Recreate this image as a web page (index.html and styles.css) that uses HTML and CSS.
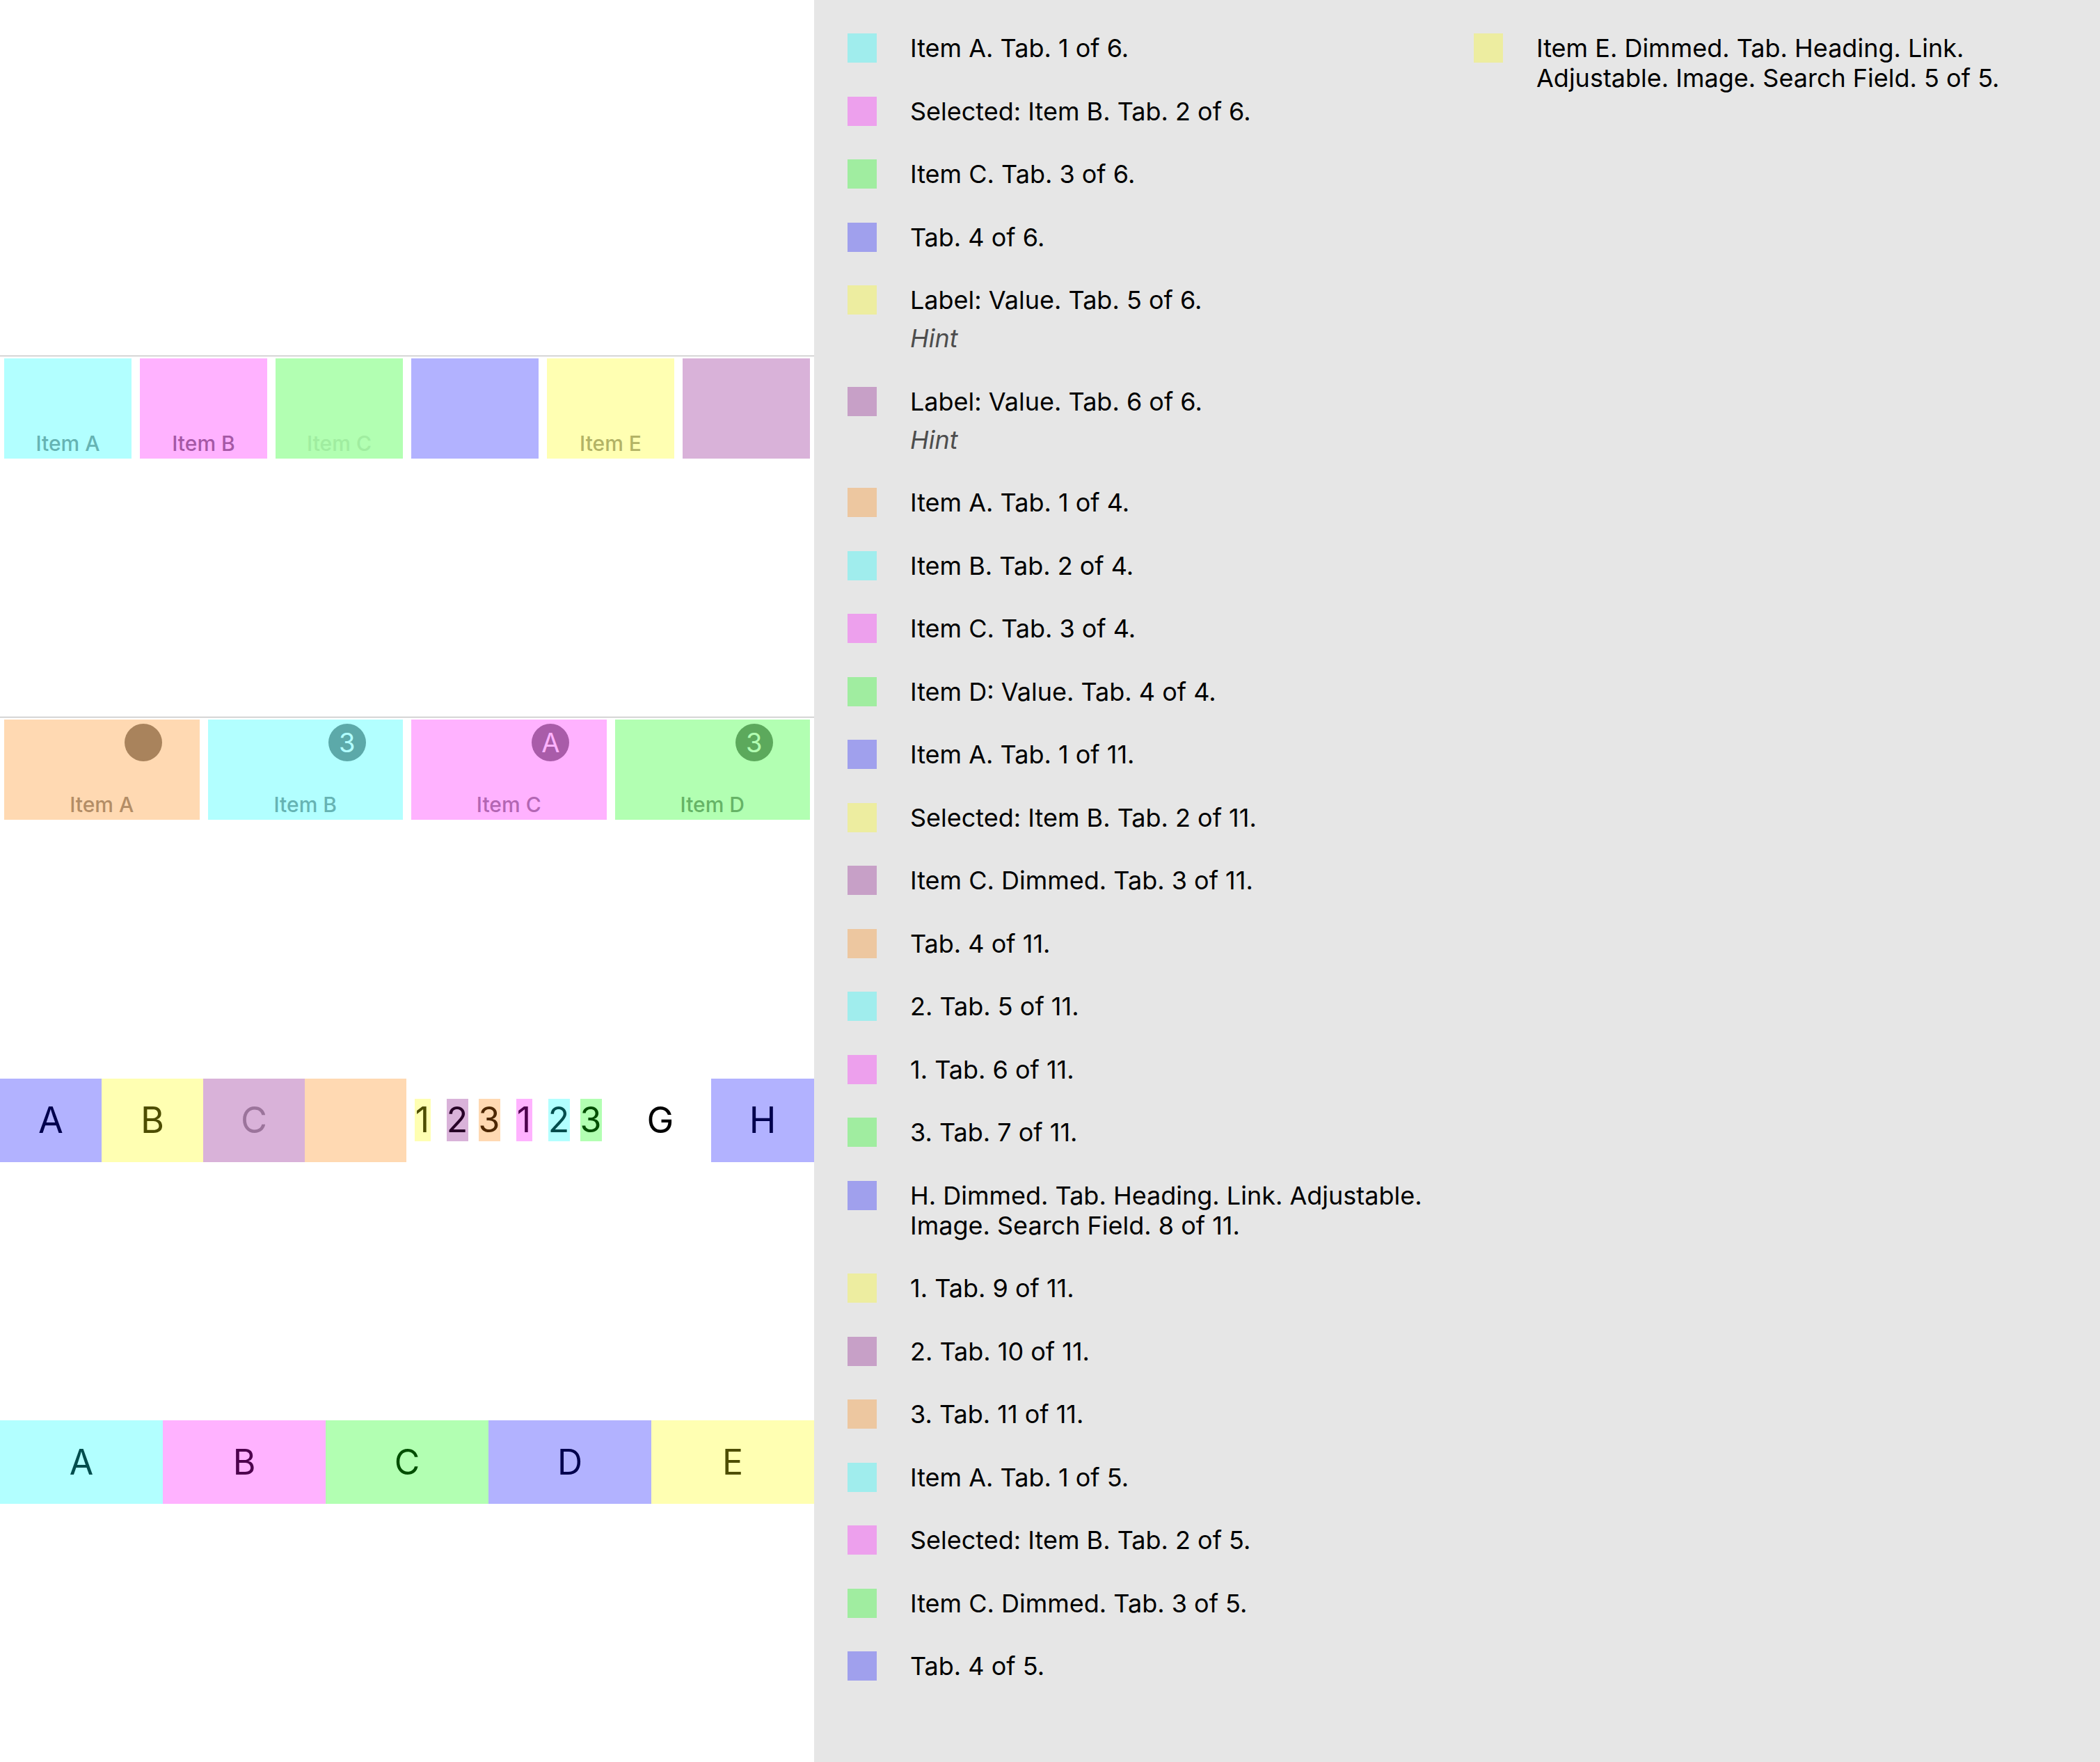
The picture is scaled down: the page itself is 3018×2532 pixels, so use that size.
FILE: index.html
```html
<!DOCTYPE html>
<html lang="en">
<head>
<meta charset="utf-8">
<meta name="viewport" content="width=device-width, initial-scale=1">
<title>Tab bars</title>
<link rel="stylesheet" href="styles.css">
</head>
<body>
<main class="page">
  <section class="preview" aria-label="Tab bars">
    <div class="tabbar tabbar-six" role="tablist">
      <button class="tab cyan" role="tab"><span class="tab-label">Item A</span></button>
      <button class="tab magenta" role="tab" aria-selected="true"><span class="tab-label">Item B</span></button>
      <button class="tab green" role="tab"><span class="tab-label faint">Item C</span></button>
      <button class="tab blue" role="tab"></button>
      <button class="tab yellow" role="tab" aria-label="Label"><span class="tab-label">Item E</span></button>
      <button class="tab purple" role="tab" aria-label="Label"></button>
    </div>
    <div class="tabbar tabbar-four" role="tablist">
      <button class="tab orange" role="tab"><span class="badge"></span><span class="tab-label">Item A</span></button>
      <button class="tab cyan" role="tab"><span class="badge">3</span><span class="tab-label">Item B</span></button>
      <button class="tab magenta" role="tab"><span class="badge">A</span><span class="tab-label">Item C</span></button>
      <button class="tab green" role="tab"><span class="badge">3</span><span class="tab-label">Item D</span></button>
    </div>
    <div class="strip strip-eight" role="tablist">
      <button class="segment blue" role="tab">A</button>
      <button class="segment yellow" role="tab" aria-selected="true">B</button>
      <button class="segment purple" role="tab" disabled>C</button>
      <button class="segment orange" role="tab"></button>
      <div class="digits">
        <button class="digit yellow" role="tab">1</button>
        <button class="digit purple" role="tab">2</button>
        <button class="digit orange" role="tab">3</button>
      </div>
      <div class="digits">
        <button class="digit magenta" role="tab">1</button>
        <button class="digit cyan" role="tab">2</button>
        <button class="digit green" role="tab">3</button>
      </div>
      <div class="segment">G</div>
      <button class="segment blue" role="tab">H</button>
    </div>
    <div class="strip strip-five" role="tablist">
      <button class="segment cyan" role="tab">A</button>
      <button class="segment magenta" role="tab" aria-selected="true">B</button>
      <button class="segment green" role="tab">C</button>
      <button class="segment blue" role="tab">D</button>
      <button class="segment yellow" role="tab">E</button>
    </div>
  </section>

  <section class="legend" aria-label="Descriptions">
    <ul class="legend-column">
      <li class="entry cyan"><p>Item A. Tab. 1 of 6.</p></li>
      <li class="entry magenta"><p>Selected: Item B. Tab. 2 of 6.</p></li>
      <li class="entry green"><p>Item C. Tab. 3 of 6.</p></li>
      <li class="entry blue"><p>Tab. 4 of 6.</p></li>
      <li class="entry yellow"><p>Label: Value. Tab. 5 of 6.</p><p class="hint">Hint</p></li>
      <li class="entry purple"><p>Label: Value. Tab. 6 of 6.</p><p class="hint">Hint</p></li>
      <li class="entry orange"><p>Item A. Tab. 1 of 4.</p></li>
      <li class="entry cyan"><p>Item B. Tab. 2 of 4.</p></li>
      <li class="entry magenta"><p>Item C. Tab. 3 of 4.</p></li>
      <li class="entry green"><p>Item D: Value. Tab. 4 of 4.</p></li>
      <li class="entry blue"><p>Item A. Tab. 1 of 11.</p></li>
      <li class="entry yellow"><p>Selected: Item B. Tab. 2 of 11.</p></li>
      <li class="entry purple"><p>Item C. Dimmed. Tab. 3 of 11.</p></li>
      <li class="entry orange"><p>Tab. 4 of 11.</p></li>
      <li class="entry cyan"><p>2. Tab. 5 of 11.</p></li>
      <li class="entry magenta"><p>1. Tab. 6 of 11.</p></li>
      <li class="entry green"><p>3. Tab. 7 of 11.</p></li>
      <li class="entry blue"><p>H. Dimmed. Tab. Heading. Link. Adjustable. Image. Search Field. 8 of 11.</p></li>
      <li class="entry yellow"><p>1. Tab. 9 of 11.</p></li>
      <li class="entry purple"><p>2. Tab. 10 of 11.</p></li>
      <li class="entry orange"><p>3. Tab. 11 of 11.</p></li>
      <li class="entry cyan"><p>Item A. Tab. 1 of 5.</p></li>
      <li class="entry magenta"><p>Selected: Item B. Tab. 2 of 5.</p></li>
      <li class="entry green"><p>Item C. Dimmed. Tab. 3 of 5.</p></li>
      <li class="entry blue"><p>Tab. 4 of 5.</p></li>
    </ul>
    <ul class="legend-column">
      <li class="entry yellow"><p>Item E. Dimmed. Tab. Heading. Link. Adjustable. Image. Search Field. 5 of 5.</p></li>
    </ul>
  </section>
</main>
</body>
</html>
```
FILE: styles.css
```css
* {
  box-sizing: border-box;
}

body {
  margin: 0;
  background: #fff;
  color: #000;
  font-family: Inter, "Liberation Sans", sans-serif;
}

button {
  border: 0;
  padding: 0;
  background: none;
  color: inherit;
  font: inherit;
}

/* Marker tints, laid translucently over whatever they mark */
.cyan { --tint: rgb(0 255 255 / 30%); }
.magenta { --tint: rgb(255 0 255 / 30%); }
.green { --tint: rgb(0 255 0 / 30%); }
.blue { --tint: rgb(0 0 255 / 30%); }
.yellow { --tint: rgb(255 255 0 / 30%); }
.purple { --tint: rgb(128 0 128 / 30%); }
.orange { --tint: rgb(255 128 0 / 30%); }

.page {
  display: grid;
  grid-template-columns: minmax(0, 195fr) minmax(0, 308fr);
  min-height: 100vh;
}

/* Tab bars */
.preview {
  display: flex;
  flex-direction: column;
  justify-content: space-evenly;
  padding-top: 140px;
}

.tab,
.segment,
.digit {
  position: relative;
}

.tab::after,
.segment::after,
.digit::after {
  content: "";
  position: absolute;
  inset: 0;
  background: var(--tint, transparent);
}

.tabbar {
  display: grid;
  gap: 12px;
  padding: 3px 6px 0;
  border-top: 1px solid #b2b2b2;
}

.tabbar-six {
  grid-template-columns: repeat(6, minmax(0, 1fr));
}

.tabbar-four {
  grid-template-columns: repeat(4, minmax(0, 1fr));
}

.tab {
  display: flex;
  flex-direction: column;
  justify-content: flex-end;
  align-items: center;
  height: 144px;
  padding-bottom: 4px;
  color: #929292;
}

.tab[aria-selected="true"] {
  color: #7e7e7e;
}

.tab-label {
  font-size: 30px;
  font-weight: 500;
  line-height: 36px;
}

.faint {
  color: #e5e5e5;
}

.badge {
  position: absolute;
  top: 6px;
  left: calc(50% + 33px);
  width: 54px;
  height: 54px;
  border-radius: 50%;
  background: #858585;
  color: #fff;
  font-size: 38px;
  line-height: 54px;
  text-align: center;
}

.strip {
  display: grid;
  height: 120px;
}

.strip-eight {
  grid-template-columns: repeat(7, minmax(0, 73fr)) minmax(0, 74fr);
  font-size: 52px;
}

.strip-five {
  grid-template-columns: repeat(5, minmax(0, 1fr));
  font-size: 50px;
}

.segment {
  display: flex;
  justify-content: center;
  align-items: center;
}

.segment:disabled {
  color: #a7a7a7;
}

.digits {
  display: flex;
  justify-content: center;
  align-items: center;
  gap: 15px;
  font-size: 50px;
  line-height: 61px;
}

.digit {
  display: flex;
  justify-content: center;
  width: 31px;
}

.digit:first-child {
  width: 23px;
  margin-right: 8px;
}

/* Legend */
.legend {
  display: grid;
  grid-template-columns: repeat(2, minmax(0, 1fr));
  gap: 60px;
  padding: 48px 60px 116px 48px;
  background: #e6e6e6;
}

.legend-column {
  display: flex;
  flex-direction: column;
  justify-content: space-between;
  gap: 40px;
  margin: 0;
  padding: 0;
  list-style: none;
}

.entry {
  display: grid;
  grid-template-columns: 42px minmax(0, 1fr);
  column-gap: 48px;
  row-gap: 12px;
  font-size: 36px;
  line-height: 43px;
}

.entry::before {
  content: "";
  height: 42px;
  background: var(--tint);
}

.entry p {
  grid-column: 2;
  margin: 0;
}

.entry .hint {
  color: #4d4d4d;
  font-style: italic;
}
```
